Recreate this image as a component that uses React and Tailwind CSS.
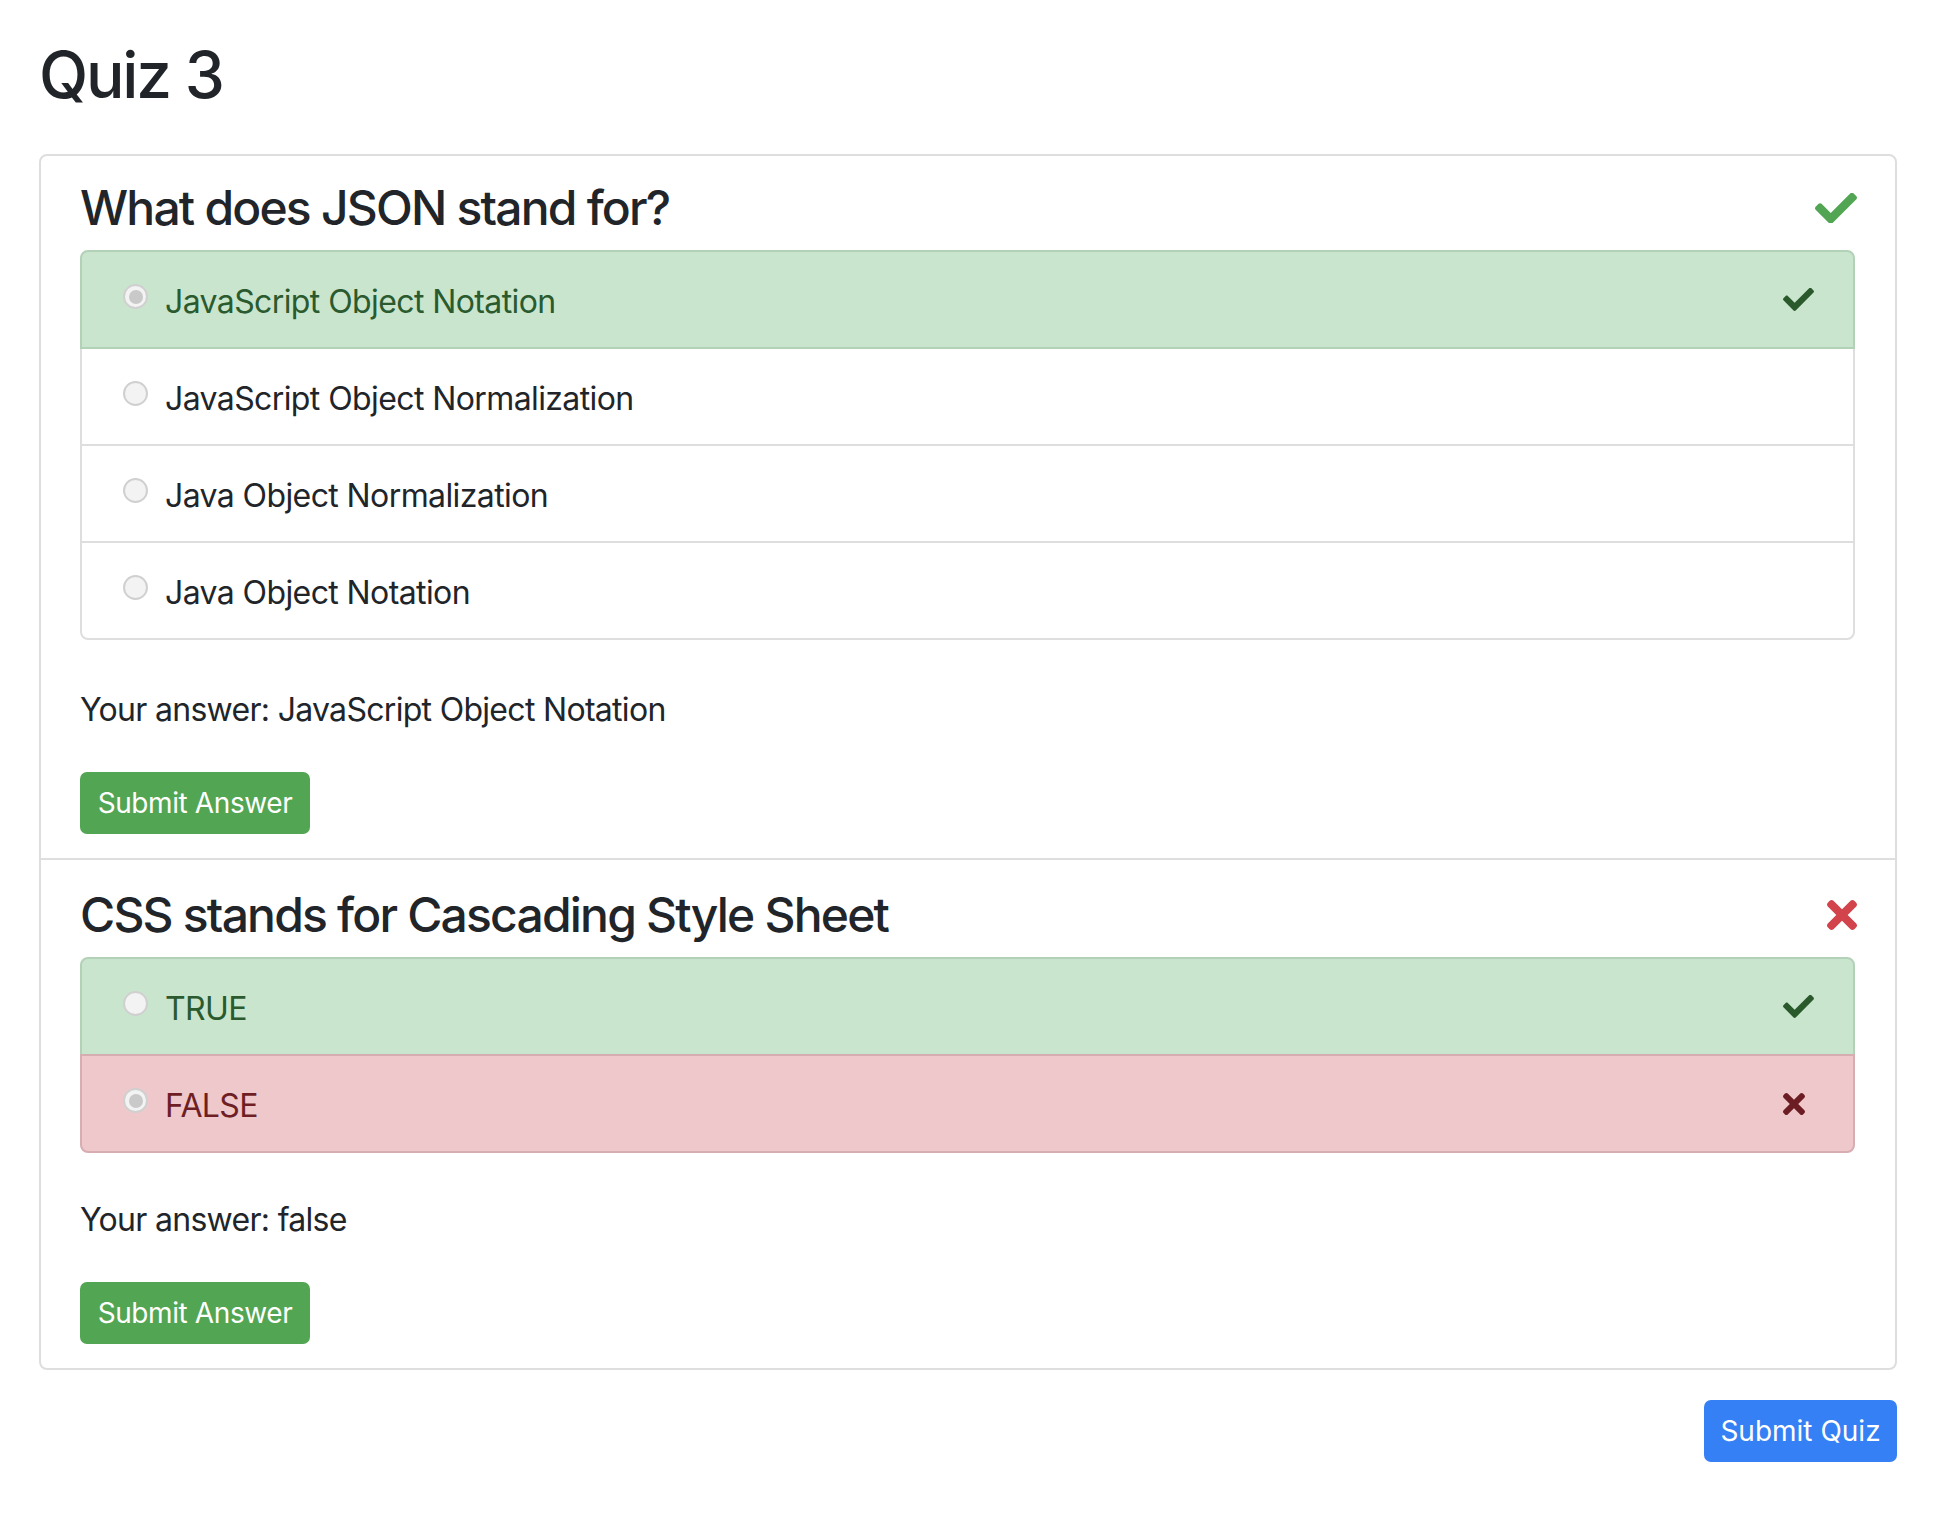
import React from 'react'

const CheckIcon = ({ w, color }) => (
  <svg width={w} height={w * 374 / 512} viewBox="0 69 512 374" fill={color}>
    <path d="M173.898 439.404l-166.4-166.4c-9.997-9.997-9.997-26.206 0-36.204l36.203-36.204c9.997-9.998 26.207-9.998 36.204 0L192 312.69 432.095 72.596c9.997-9.997 26.207-9.997 36.204 0l36.203 36.204c9.997 9.997 9.997 26.206 0 36.204l-294.4 294.401c-9.998 9.997-26.207 9.997-36.204-.001z" />
  </svg>
)

const TimesIcon = ({ w, color }) => (
  <svg width={w} height={w} viewBox="0 80 352 352" fill={color}>
    <path d="M242.72 256l100.07-100.07c12.28-12.28 12.28-32.19 0-44.48l-22.24-22.24c-12.28-12.28-32.19-12.28-44.48 0L176 189.28 75.93 89.21c-12.28-12.28-32.19-12.28-44.48 0L9.21 111.45c-12.28 12.28-12.28 32.19 0 44.48L109.28 256 9.21 356.07c-12.28 12.28-12.28 32.19 0 44.48l22.24 22.24c12.28 12.28 32.2 12.28 44.48 0L176 322.72l100.07 100.07c12.28 12.28 32.2 12.28 44.48 0l22.24-22.24c12.28-12.28 12.28-32.19 0-44.48L242.72 256z" />
  </svg>
)

const Radio = ({ checked }) => (
  <div className="w-[25px] h-[25px] rounded-full border-[2px] border-[#d0d0d0] bg-[#f3f3f3] flex items-center justify-center -mt-[6px] shrink-0">
    {checked && <div className="w-[14px] h-[14px] rounded-full bg-[#c9c9c9]" />}
  </div>
)

const Option = ({ text, state, checked, first, last }) => {
  let cls = 'bg-white border-[#dedede] text-[#212529]'
  if (state === 'right') cls = 'bg-[#c9e5ce] border-[#b3d1b7] text-[#2a5a2e] z-10'
  if (state === 'wrong') cls = 'bg-[#efc8cb] border-[#d6adb1] text-[#6e1f25] z-10'
  return (
    <div
      className={
        'relative h-[99px] border-2 flex items-center pl-[41px] pr-[38px] ' +
        cls +
        (first ? ' rounded-t-[8px]' : ' -mt-[2px]') +
        (last ? ' rounded-b-[8px]' : '')
      }
    >
      <Radio checked={checked} />
      <span className="ml-[17px] pt-[4px] text-[32px] leading-[48px] tracking-[-0.6px] flex-1">{text}</span>
      <div className="w-[32px] flex justify-start">
        {state === 'right' && <CheckIcon w={31} color="#2a5a2b" />}
        {state === 'wrong' && <TimesIcon w={22} color="#6b1d23" />}
      </div>
    </div>
  )
}

const Question = ({ title, correct, options, answer, top, gap, divider }) => (
  <div className={(divider ? 'border-t-2 border-[#dedede] ' : '') + top + ' pl-[39px] pr-[38px] pb-[24px]'}>
    <div className="flex items-center justify-between">
      <h4 className="text-[48px] leading-[58px] font-medium tracking-[-1.8px]">{title}</h4>
      {correct ? <CheckIcon w={42} color="#52a552" /> : <TimesIcon w={30} color="#d2434b" />}
    </div>
    <div className="mt-[13px] mr-[2px] flex flex-col">
      {options.map((o, i) => (
        <Option key={i} {...o} first={i === 0} last={i === options.length - 1} />
      ))}
    </div>
    <p className={gap + ' text-[32px] leading-[48px] tracking-[-0.7px]'}>Your answer: {answer}</p>
    <button className="mt-[38px] w-[230px] h-[62px] rounded-[7px] bg-[#52a552] text-white text-[28px] leading-[42px] tracking-[-0.4px] flex items-center justify-center">
      Submit Answer
    </button>
  </div>
)

export default function App() {
  return (
    <div className="min-h-screen bg-white pl-[39px] pr-[37px] pt-[36px] pb-[60px] text-[#212529]" style={{ fontFamily: "Inter, 'Noto Sans', sans-serif" }}>
      <h2 className="text-[64px] leading-[77px] font-medium tracking-[-2.2px]">Quiz 3</h2>
      <div className="mt-[41px] border-2 border-[#dedede] rounded-[8px]">
        <Question
          title="What does JSON stand for?"
          correct
          top="pt-[23px]"
          gap="mt-[46px]"
          answer="JavaScript Object Notation"
          options={[
            { text: 'JavaScript Object Notation', state: 'right', checked: true },
            { text: 'JavaScript Object Normalization' },
            { text: 'Java Object Normalization' },
            { text: 'Java Object Notation' },
          ]}
        />
        <Question
          title="CSS stands for Cascading Style Sheet"
          correct={false}
          divider
          top="pt-[26px]"
          gap="mt-[43px]"
          answer="false"
          options={[
            { text: 'TRUE', state: 'right' },
            { text: 'FALSE', state: 'wrong', checked: true },
          ]}
        />
      </div>
      <div className="flex justify-end mt-[30px]">
        <button className="w-[193px] h-[62px] rounded-[7px] bg-[#3480f4] text-white text-[28px] leading-[42px] flex items-center justify-center">
          Submit Quiz
        </button>
      </div>
    </div>
  )
}
